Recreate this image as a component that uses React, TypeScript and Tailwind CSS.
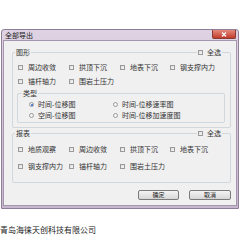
import React from "react";

const Check = ({ label }: { label: string }) => (
  <div className="flex items-center h-full">
    <span className="w-[5px] h-[5px] border border-[#9a9a9a] bg-gradient-to-br from-[#dcdcdc] to-[#f8f8f8] shrink-0" />
    <span className="ml-[5px] whitespace-nowrap">{label}</span>
  </div>
);

const Radio = ({ label, checked }: { label: string; checked?: boolean }) => (
  <div className="flex items-center h-full">
    <span className="w-[5px] h-[5px] rounded-full border border-[#9a9a9a] bg-[#f4f4f4] shrink-0 flex items-center justify-center">
      {checked && <span className="w-[2px] h-[2px] rounded-full bg-[#2a5fcf]" />}
    </span>
    <span className="ml-[4px] whitespace-nowrap">{label}</span>
  </div>
);

const SelectAll = () => (
  <div className="flex items-center bg-[#f0f0f0] px-[1px] h-[7px]">
    <span className="w-[5px] h-[5px] border border-[#9a9a9a] bg-gradient-to-br from-[#dcdcdc] to-[#f8f8f8]" />
    <span className="ml-[4px]">全选</span>
  </div>
);

export default function App() {
  return (
    <div className="w-[240px] h-[240px] bg-white overflow-hidden text-[#333] font-['Noto_Sans_CJK_SC',sans-serif] text-[7px] leading-none">
      <div className="pt-[29px] pl-[1px]">
        {/* window */}
        <div className="relative w-[238px] h-[180px] flex flex-col border border-[#8e7e99] rounded-t-[3px] bg-gradient-to-b from-[#ded3e3] to-[#c6b7cf]">
          <div className="h-[10px] flex items-center pl-[3px] text-[#1a1a1a]">全部导出</div>
          <div className="absolute top-0 right-[2px] w-[24px] h-[9px] rounded-b-[2px] border border-[#8a3a30] border-t-0 bg-gradient-to-b from-[#e4897a] to-[#c0392b] flex items-center justify-center">
            <svg width="6" height="5" viewBox="0 0 6 5">
              <path d="M1 0.5 L5 4.5 M5 0.5 L1 4.5" stroke="white" strokeWidth="1.2" />
            </svg>
          </div>
          {/* body */}
          <div className="flex-1 mx-[1px] mb-[2px] bg-[#f0f0f0] border border-[#a596b0] flex flex-col">
            {/* 图形 group */}
            <div className="relative mt-[11px] ml-[8px] mr-[5px] h-[76px] border border-[#d0d8de] rounded-[2px] flex flex-col">
              <div className="absolute -top-[4px] left-[2px] right-[8px] flex justify-between items-center">
                <span className="bg-[#f0f0f0] px-[1px] h-[7px]">图形</span>
                <SelectAll />
              </div>
              <div className="mt-[7px] pl-[5px] grid grid-cols-[51px_51px_50px_auto] grid-rows-[14px_14px]">
                <Check label="周边收敛" />
                <Check label="拱顶下沉" />
                <Check label="地表下沉" />
                <Check label="钢支撑内力" />
                <Check label="锚杆轴力" />
                <Check label="围岩土压力" />
              </div>
              {/* 类型 group */}
              <div className="relative mt-[5px] ml-[4px] mr-[5px] h-[30px] border border-[#d0d8de] rounded-[2px]">
                <span className="absolute -top-[4px] left-[4px] bg-[#f0f0f0] px-[1px] h-[7px]">类型</span>
                <div className="mt-[5px] pl-[11px] grid grid-cols-[84px_auto] grid-rows-[11px_11px]">
                  <Radio label="时间-位移图" checked />
                  <Radio label="时间-位移速率图" />
                  <Radio label="空间-位移图" />
                  <Radio label="时间-位移加速度图" />
                </div>
              </div>
            </div>
            {/* 报表 group */}
            <div className="relative mt-[5px] ml-[8px] mr-[5px] h-[50px] border border-[#d0d8de] rounded-[2px]">
              <div className="absolute -top-[4px] left-[2px] right-[8px] flex justify-between items-center">
                <span className="bg-[#f0f0f0] px-[1px] h-[7px]">报表</span>
                <SelectAll />
              </div>
              <div className="mt-[7px] pl-[5px] grid grid-cols-[51px_51px_50px_auto] grid-rows-[17px_17px]">
                <Check label="地质观察" />
                <Check label="周边收敛" />
                <Check label="拱顶下沉" />
                <Check label="地表下沉" />
                <Check label="钢支撑内力" />
                <Check label="锚杆轴力" />
                <Check label="围岩土压力" />
              </div>
            </div>
            {/* buttons */}
            <div className="mt-[7px] mr-[5px] flex justify-end gap-[10px]">
              <button className="w-[41px] h-[10px] border border-[#7a7a7a] rounded-[2px] bg-gradient-to-b from-[#f4f4f4] to-[#d6d6d6] flex items-center justify-center text-[6px] text-[#222]">确定</button>
              <button className="w-[42px] h-[10px] border border-[#7a7a7a] rounded-[2px] bg-gradient-to-b from-[#f4f4f4] to-[#d6d6d6] flex items-center justify-center text-[6px] text-[#222]">取消</button>
            </div>
          </div>
        </div>
      </div>
      <div className="mt-[17px] text-[8px] text-[#222] whitespace-nowrap">青岛海徕天创科技有限公司</div>
    </div>
  );
}
